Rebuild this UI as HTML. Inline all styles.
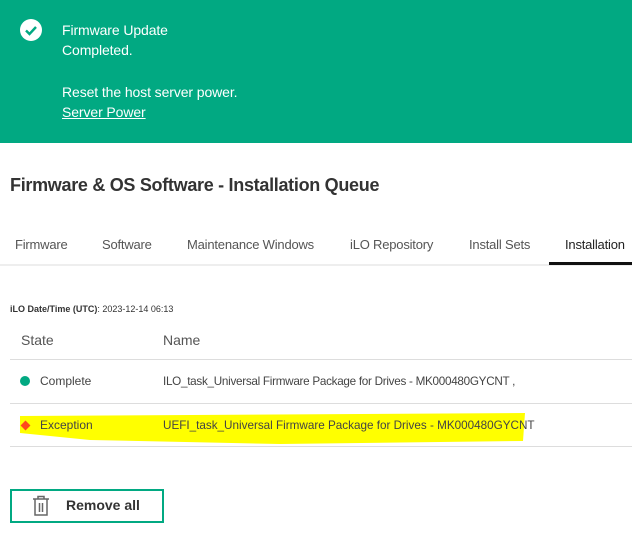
<!DOCTYPE html>
<html><head><style>
body{margin:0;width:632px;height:551px;background:#fff;font-family:"Liberation Sans",sans-serif;position:relative;overflow:hidden;color:#333}
.a{position:absolute;white-space:nowrap}
.ban{position:absolute;left:0;top:0;width:632px;height:143px;background:#01a982}
.bt{color:#fff;font-size:14px;letter-spacing:-0.1px}
.tab{font-size:13px;color:#555;top:237px;letter-spacing:-0.2px}
.line{position:absolute;left:10px;width:622px;height:1px;background:#ddd}
</style></head><body>
<div class="ban"></div>
<svg class="a" style="left:20px;top:19px" width="22" height="22"><circle cx="11" cy="11" r="11" fill="#fff"/><path d="M6 11.5l3.5 3.5 6.5-7" stroke="#01a982" stroke-width="2.4" fill="none"/></svg>
<div class="a bt" style="left:62px;top:22px">Firmware Update</div>
<div class="a bt" style="left:62px;top:42px">Completed.</div>
<div class="a bt" style="left:62px;top:84px">Reset the host server power.</div>
<div class="a bt" style="left:62px;top:104px;text-decoration:underline">Server Power</div>
<div class="a" style="left:10px;top:175px;font-size:18px;font-weight:bold;color:#333;letter-spacing:-0.3px">Firmware &amp; OS Software - Installation Queue</div>
<div class="a tab" style="left:15px">Firmware</div>
<div class="a tab" style="left:102px">Software</div>
<div class="a tab" style="left:187px">Maintenance Windows</div>
<div class="a tab" style="left:350px">iLO Repository</div>
<div class="a tab" style="left:469px">Install Sets</div>
<div class="a tab" style="left:565px;color:#222">Installation</div>
<div class="a" style="left:0;top:264px;width:632px;height:2px;background:#eee"></div>
<div class="a" style="left:549px;top:262px;width:83px;height:3px;background:#111"></div>
<div class="a" style="left:10px;top:304px;font-size:9px;color:#333"><b>iLO Date/Time (UTC)</b>: 2023-12-14 06:13</div>
<div class="a" style="left:21px;top:332px;font-size:14px;color:#555">State</div>
<div class="a" style="left:163px;top:332px;font-size:14px;color:#555">Name</div>
<div class="line" style="top:359px"></div>
<div class="line" style="top:403px"></div>
<div class="line" style="top:446px"></div>
<svg class="a" style="left:0;top:408px" width="540" height="40"><path d="M20 8 L525 5 L523 33 L280 36 L90 32 L20 25Z" fill="#ffff00"/></svg>
<div class="a" style="left:20px;top:376px;width:10px;height:10px;border-radius:50%;background:#01a982"></div>
<div class="a" style="left:40px;top:374px;font-size:12px;color:#444">Complete</div>
<div class="a" style="left:163px;top:375px;font-size:11.7px;letter-spacing:-0.28px;color:#444">ILO_task_Universal Firmware Package for Drives - MK000480GYCNT ,</div>
<div class="a" style="left:22px;top:422px;width:7px;height:7px;background:#ff4a1c;transform:rotate(45deg)"></div>
<div class="a" style="left:40px;top:418px;font-size:12px;color:#444">Exception</div>
<div class="a" style="left:163px;top:419px;font-size:11.7px;color:#444">UEFI_task_Universal Firmware Package for Drives - MK000480GYCNT</div>
<div class="a" style="left:10px;top:489px;width:150px;height:30px;border:2px solid #01a982"></div>
<svg class="a" style="left:31px;top:495px" width="20" height="22"><path d="M2 4h16M7 4V1.5h6V4M4 4v16h12V4M8.5 8v9M11.5 8v9" stroke="#666" stroke-width="1.5" fill="none"/></svg>
<div class="a" style="left:66px;top:497px;font-size:14px;font-weight:bold;color:#333">Remove all</div>
</body></html>
